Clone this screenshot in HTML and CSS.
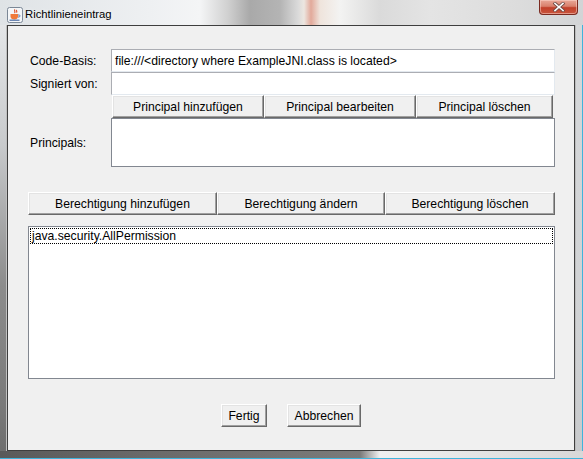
FILE: index.html
```html
<!DOCTYPE html>
<html>
<head>
<meta charset="utf-8">
<link rel="stylesheet" href="styles.css">
</head>
<body>
<div class="window">
  <div class="titlebar">
    <svg class="app-icon" width="16" height="16" viewBox="0 0 16 16">
      <rect x="0.5" y="0.5" width="15" height="15" rx="2" fill="#f4f6f8" stroke="#7b8796"/>
      <path d="M8 2.5c-1.5 1.2 1 2-0.5 3.5M9.8 3c-1 1 0.8 1.5-0.3 2.6" stroke="#e0542a" stroke-width="1.2" fill="none"/>
      <path d="M3.5 7h7.5v2.5c0 2-1.6 3-3.7 3s-3.8-1-3.8-3z" fill="#f07a3a"/>
      <path d="M11 8h1.3c0.9 0 0.9 2-0.3 2h-1" stroke="#5a78a8" stroke-width="1" fill="none"/>
      <path d="M2.5 13.2h10" stroke="#4a6aa0" stroke-width="1.2"/>
    </svg>
    <span class="title">Richtlinieneintrag</span>
    <span class="spacer"></span>
    <div class="close-btn">
      <svg width="14" height="10" viewBox="0 0 14 10">
        <path d="M3 1.5l8 7M11 1.5l-8 7" stroke="#6e4a44" stroke-width="3.2" stroke-linecap="square"/>
        <path d="M3 1.5l8 7M11 1.5l-8 7" stroke="#ffffff" stroke-width="1.6" stroke-linecap="square"/>
      </svg>
    </div>
  </div>
  <div class="body-row">
    <div class="frame-left"></div>
    <div class="content">
      <div class="form">
        <div class="label">Code-Basis:</div>
        <div class="field">file:///&lt;directory where ExampleJNI.class is located&gt;</div>
        <div class="label">Signiert von:</div>
        <div class="field"></div>
        <div class="label"></div>
        <div class="btn-row principal-btns">
          <div class="btn w151">Principal hinzufügen</div>
          <div class="btn w152">Principal bearbeiten</div>
          <div class="btn w137">Principal löschen</div>
        </div>
        <div class="label principals-label">Principals:</div>
        <div class="list principals-list"></div>
      </div>
      <div class="btn-row perm-btns">
        <div class="btn w188">Berechtigung hinzufügen</div>
        <div class="btn w168">Berechtigung ändern</div>
        <div class="btn w170">Berechtigung löschen</div>
      </div>
      <div class="list perm-list">
        <div class="list-item">java.security.AllPermission</div>
      </div>
      <div class="bottom-btns">
        <div class="btn w45">Fertig</div>
        <div class="btn w73">Abbrechen</div>
      </div>
    </div>
    <div class="frame-right"></div>
  </div>
  <div class="frame-bottom"></div>
</div>
</body>
</html>
```
FILE: styles.css
```css
html, body {
  margin: 0;
  padding: 0;
  background: #000;
}
.window {
  width: 583px;
  height: 459px;
  display: flex;
  flex-direction: column;
  overflow: hidden;
  font-family: "Liberation Sans", Arial, sans-serif;
  font-size: 12.2px;
  color: #000;
  background: linear-gradient(to right, #dfe3e6 0, #eef0f2 150px, #f4f5f6 200px, #d0d0d0 228px, #a9a9a9 250px, #b4b4b4 280px, #dadada 298px, #ece6e0 304px, #e2a99a 311px, #efe4dc 320px, #f3f3f2 340px, #dadada 380px, #e4e4e4 430px, #dcdcdc 520px, #d2d4d6 583px);
}
.titlebar {
  height: 25px;
  display: flex;
  align-items: flex-start;
  position: relative;
}
.app-icon {
  margin: 7px 0 0 7px;
  flex: none;
}
.title {
  margin: 7px 0 0 2px;
  font-size: 11.3px;
  line-height: 15px;
  color: #000;
  text-shadow: 0 0 4px rgba(255,255,255,0.9);
}
.spacer { flex: 1; }
.close-btn {
  width: 39px;
  height: 15px;
  margin-right: 5px;
  box-sizing: border-box;
  border: 1px solid #7a2a20;
  border-top: none;
  border-radius: 0 0 4px 4px;
  background: linear-gradient(to bottom, #e9a898 0, #d9806c 45%, #c2402a 55%, #c8563e 100%);
  box-shadow: inset 0 0 0 1px rgba(255,220,210,0.5);
  display: flex;
  align-items: center;
  justify-content: center;
}
.body-row {
  display: flex;
  flex: none;
  height: 426px;
}
.frame-left {
  width: 7px;
  background: linear-gradient(to bottom, #e4e6e8 0, #c8cacc 120px, #8c8c8c 260px, #7a7a7a 380px, #6e6e6e 426px);
  box-shadow: inset -1px 0 #c0c0c0;
}
.frame-right {
  width: 8px;
  background: linear-gradient(to bottom, #d6d8da 0, #d0d2d4 300px, #c8cacc 426px);
  box-shadow: inset -1px 0 #3fb4dc, inset 1px 0 #bcbcbc;
}
.frame-bottom {
  flex: 1;
  background: linear-gradient(to right, #5a5a5a 0, #6a6a6a 150px, #7a7a7a 360px, #f0f0f0 380px, #d8d8d8 583px);
  box-shadow: inset 0 -1px #3fb4dc;
}
.content {
  flex: 1;
  border: 1px solid #3e3e3e;
  background: #f0f0f0;
  display: flex;
  flex-direction: column;
  align-items: stretch;
}
.form {
  display: grid;
  grid-template-columns: 81px 444px;
  margin: 23px 0 0 22px;
}
.label {
  display: flex;
  align-items: center;
  color: #000;
}
.field {
  height: 23px;
  box-sizing: border-box;
  border: 1px solid;
  border-color: #abadb3 #e3e9ef #e3e9ef #abadb3;
  background: #fff;
  padding: 0 3px;
  display: flex;
  align-items: center;
  white-space: nowrap;
}
.btn-row {
  display: flex;
}
.principal-btns {
  padding-left: 1px;
}
.btn {
  box-sizing: border-box;
  height: 23px;
  display: flex;
  align-items: center;
  justify-content: center;
  background: #f0f0f0;
  border: 1px solid;
  border-color: #ffffff #696969 #696969 #ffffff;
  box-shadow: inset -1px -1px #a0a0a0, inset 1px 1px #e3e3e3;
  white-space: nowrap;
  flex: none;
}
.w151 { width: 152px; }
.w152 { width: 152px; }
.w137 { width: 137px; }
.w188 { width: 189px; }
.w168 { width: 168px; }
.w170 { width: 170px; }
.w45 { width: 46px; }
.w73 { width: 74px; }
.principals-list {
  height: 49px;
  margin-top: 0;
}
.list {
  box-sizing: border-box;
  border: 1px solid #828790;
  background: #fff;
}
.perm-btns {
  margin: 25px 0 0 20px;
}
.perm-list {
  margin: 11px 0 0 20px;
  width: 527px;
  height: 153px;
  padding: 1px;
}
.list-item {
  height: 16px;
  box-sizing: border-box;
  border: 1px dotted #000;
  padding-left: 1px;
  line-height: 14px;
}
.bottom-btns {
  display: flex;
  justify-content: center;
  gap: 20px;
  margin-top: 25px;
}
```
